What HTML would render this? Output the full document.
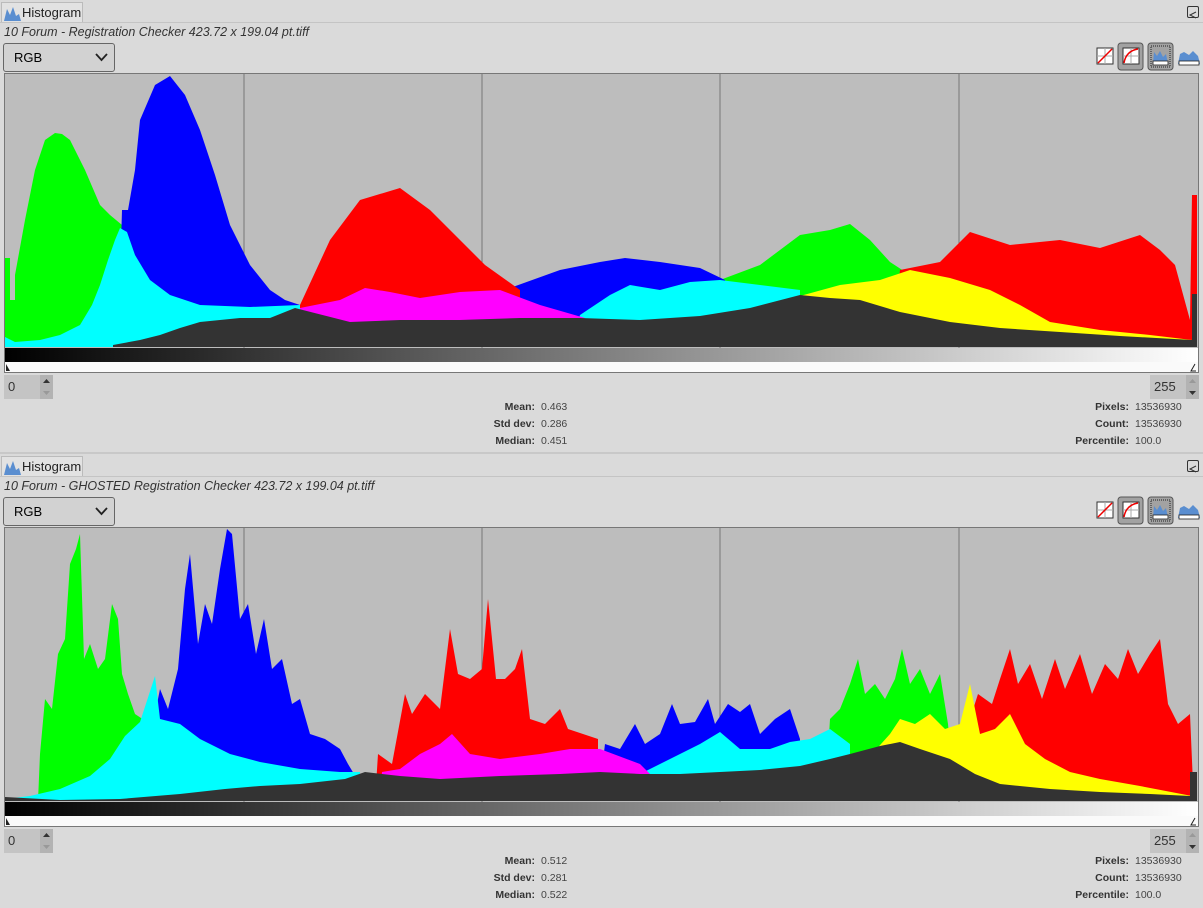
<!DOCTYPE html>
<html><head><meta charset="utf-8"><style>
*{margin:0;padding:0;box-sizing:border-box}
body{width:1203px;height:908px;background:#dadada;font-family:"Liberation Sans",sans-serif;position:relative;overflow:hidden}
.p{position:absolute;left:0;width:1203px;height:454px}
.tab{position:absolute;left:1px;top:2px;width:82px;height:21px;border:1px solid #bbb;border-bottom:none;background:#e2e2e2;font-size:13px;color:#222}
.tab span{position:absolute;left:20px;top:2px}
.sep{position:absolute;left:0;top:22px;width:1203px;height:1px;background:#c4c4c4}
.title{position:absolute;left:4px;top:25px;font-size:12.5px;font-style:italic;color:#333}
.dd{position:absolute;left:3px;top:43px;width:112px;height:29px;border:1px solid #666;border-radius:3px;background:#d2d2d2;font-size:13px}
.dd span{position:absolute;left:10px;top:6px}
.frame{position:absolute;left:4px;top:73px;width:1195px;height:300px;border:1px solid #777;background:#fafafa}
.spin{position:absolute;top:375px;width:49px;height:24px;background:#c4c4c4;font-size:13px;color:#333}
.st{position:absolute;font-size:10.5px;color:#444;line-height:17px}
.st b{color:#333}
.l{text-align:right}
.close{position:absolute;left:1187px;top:6px;width:12px;height:12px;border:1px solid #333;border-radius:2px}
</style></head><body>

<!-- PANEL 1 -->
<div class="p" style="top:0">
<div class="tab"><svg style="position:absolute;left:2px;top:3px" width="17" height="15"><path d="M0 15 L3 3 L6 9 L9 1 L12 10 L15 8 L17 15Z" fill="#5a8ed0"/></svg><span>Histogram</span></div>
<div class="sep"></div>
<div class="close"><svg width="10" height="10"><path d="M8 2 L2 5 L8 8" fill="none" stroke="#333"/></svg></div>
<div class="title">10 Forum - Registration Checker 423.72 x 199.04 pt.tiff</div>
<div class="dd"><span>RGB</span><svg style="position:absolute;left:91px;top:9px" width="13" height="9"><path d="M1 1 L6.5 7 L12 1" fill="none" stroke="#222" stroke-width="1.8"/></svg></div>
<svg style="position:absolute;left:1094px;top:42px" width="109" height="30">
<rect x="3" y="6" width="16" height="16" fill="#fff" stroke="#333"/><path d="M11 6V22M3 14H19" stroke="#aaa"/><path d="M4 21L18 7" stroke="#e00" stroke-width="1.5"/>
<rect x="24" y="1" width="25" height="27" rx="3" fill="#a2a2a2" stroke="#555"/><rect x="29" y="6" width="16" height="16" fill="#fff" stroke="#333"/><path d="M37 6V22M29 14H45" stroke="#aaa"/><path d="M30 21Q32 9 44 7" fill="none" stroke="#e00" stroke-width="1.5"/>
<rect x="54" y="1" width="25" height="27" rx="3" fill="#a2a2a2" stroke="#555"/><rect x="57" y="4" width="19" height="21" fill="none" stroke="#222" stroke-dasharray="1 1"/><path d="M59 22L60 10L63 14L66 9L69 15L72 12L74 22Z" fill="#5a8ed0"/><rect x="59" y="19" width="15" height="4" fill="#fff" stroke="#222" stroke-width=".8"/>
<path d="M84 22L86 12L90 10L95 13L99 9L104 14L106 22Z" fill="#5a8ed0"/><rect x="85" y="19" width="20" height="4" fill="#fff" stroke="#222" stroke-width=".8"/>
</svg>
<div class="frame">
<svg width="1193" height="298" style="position:absolute;left:0;top:0">
<defs><linearGradient id="g" x1="0" x2="1"><stop offset="0" stop-color="#000"/><stop offset="1" stop-color="#fff"/></linearGradient></defs>
<g transform="translate(-5,-74)">
<rect x="5" y="74" width="1193" height="274" fill="#bdbdbd"/>
<path d="M244 74V348M482 74V348M720 74V348M959 74V348" stroke="#777"/>
<polygon fill="#00ff00" points="5,347 5,258 10,258 10,300 15,300 15,275 25,220 35,170 45,140 55,133 62,134 70,140 85,170 100,205 110,215 122,225 130,347"/>
<polygon fill="#00ff00" points="720,347 720,280 760,265 800,235 830,230 850,224 870,240 890,262 910,275 910,347"/>
<polygon fill="#0000ff" points="118,347 122,210 128,210 135,170 140,120 155,85 170,76 185,95 200,130 215,175 230,225 250,265 270,290 285,300 300,305 310,308 310,347"/>
<polygon fill="#0000ff" points="505,347 510,288 560,270 600,262 625,258 660,262 700,268 725,280 725,347"/>
<polygon fill="#ff0000" points="298,347 300,305 330,240 360,200 400,188 430,210 460,240 485,265 520,290 520,347"/>
<polygon fill="#ff0000" points="890,347 900,270 940,262 970,232 1010,245 1060,240 1100,248 1140,235 1160,250 1175,265 1190,320 1192,195 1197,195 1197,347"/>
<polygon fill="#00ffff" points="5,347 5,337 15,342 40,340 60,335 80,325 92,305 100,285 108,260 115,240 120,228 127,232 135,255 150,280 170,295 200,305 250,307 300,305 300,347"/>
<polygon fill="#00ffff" points="570,347 580,315 610,295 630,285 660,290 690,282 720,280 760,285 800,290 800,347"/>
<polygon fill="#ff00ff" points="295,347 300,308 340,300 365,288 390,292 420,298 460,292 500,290 540,305 585,318 585,347"/>
<polygon fill="#ffff00" points="795,347 800,296 840,285 880,280 910,270 950,278 990,290 1020,305 1050,322 1100,330 1150,335 1192,340 1192,347"/>
<polygon fill="#333" points="5,347 113,347 113,345 140,340 160,335 180,328 200,322 240,318 270,318 295,308 350,322 400,320 460,320 520,318 580,318 640,320 700,316 750,308 800,295 830,298 860,300 900,312 950,322 1000,328 1060,332 1120,336 1192,340 1192,294 1197,294 1197,347"/>
<rect x="5" y="348" width="1193" height="14" fill="url(#g)"/>
<rect x="5" y="362" width="1193" height="10" fill="#fafafa"/>
<path d="M6 371V364L10 371Z" fill="#222"/><path d="M1195 364L1191 371H1196" fill="none" stroke="#222"/>
</g></svg></div>
<div class="spin" style="left:4px"><span style="position:absolute;left:4px;top:4px">0</span><div style="position:absolute;left:36px;top:0;width:13px;height:24px;background:#b3b3b3"></div><svg style="position:absolute;left:38px;top:2px" width="9" height="20"><path d="M1 6L4.5 2L8 6Z" fill="#333"/><path d="M1 14L4.5 18L8 14Z" fill="#999"/></svg></div>
<div class="spin" style="left:1150px"><span style="position:absolute;left:4px;top:4px">255</span><div style="position:absolute;left:36px;top:0;width:13px;height:24px;background:#b3b3b3"></div><svg style="position:absolute;left:38px;top:2px" width="9" height="20"><path d="M1 6L4.5 2L8 6Z" fill="#999"/><path d="M1 14L4.5 18L8 14Z" fill="#333"/></svg></div>
<div class="st l" style="left:440px;top:399px;width:95px"><b>Mean:</b><br><b>Std dev:</b><br><b>Median:</b></div>
<div class="st" style="left:541px;top:399px">0.463<br>0.286<br>0.451</div>
<div class="st l" style="left:1030px;top:399px;width:99px"><b>Pixels:</b><br><b>Count:</b><br><b>Percentile:</b></div>
<div class="st" style="left:1135px;top:399px">13536930<br>13536930<br>100.0</div>
<div style="position:absolute;left:0;top:452px;width:1203px;height:2px;background:#c8c8c8"></div>
</div>

<!-- PANEL 2 -->
<div class="p" style="top:454px">
<div class="tab"><svg style="position:absolute;left:2px;top:3px" width="17" height="15"><path d="M0 15 L3 3 L6 9 L9 1 L12 10 L15 8 L17 15Z" fill="#5a8ed0"/></svg><span>Histogram</span></div>
<div class="sep"></div>
<div class="close"><svg width="10" height="10"><path d="M8 2 L2 5 L8 8" fill="none" stroke="#333"/></svg></div>
<div class="title">10 Forum - GHOSTED Registration Checker 423.72 x 199.04 pt.tiff</div>
<div class="dd"><span>RGB</span><svg style="position:absolute;left:91px;top:9px" width="13" height="9"><path d="M1 1 L6.5 7 L12 1" fill="none" stroke="#222" stroke-width="1.8"/></svg></div>
<svg style="position:absolute;left:1094px;top:42px" width="109" height="30">
<rect x="3" y="6" width="16" height="16" fill="#fff" stroke="#333"/><path d="M11 6V22M3 14H19" stroke="#aaa"/><path d="M4 21L18 7" stroke="#e00" stroke-width="1.5"/>
<rect x="24" y="1" width="25" height="27" rx="3" fill="#a2a2a2" stroke="#555"/><rect x="29" y="6" width="16" height="16" fill="#fff" stroke="#333"/><path d="M37 6V22M29 14H45" stroke="#aaa"/><path d="M30 21Q32 9 44 7" fill="none" stroke="#e00" stroke-width="1.5"/>
<rect x="54" y="1" width="25" height="27" rx="3" fill="#a2a2a2" stroke="#555"/><rect x="57" y="4" width="19" height="21" fill="none" stroke="#222" stroke-dasharray="1 1"/><path d="M59 22L60 10L63 14L66 9L69 15L72 12L74 22Z" fill="#5a8ed0"/><rect x="59" y="19" width="15" height="4" fill="#fff" stroke="#222" stroke-width=".8"/>
<path d="M84 22L86 12L90 10L95 13L99 9L104 14L106 22Z" fill="#5a8ed0"/><rect x="85" y="19" width="20" height="4" fill="#fff" stroke="#222" stroke-width=".8"/>
</svg>
<div class="frame">
<svg width="1193" height="298" style="position:absolute;left:0;top:0">
<defs><linearGradient id="g2" x1="0" x2="1"><stop offset="0" stop-color="#000"/><stop offset="1" stop-color="#fff"/></linearGradient></defs>
<g transform="translate(-5,-74)">
<rect x="5" y="74" width="1193" height="274" fill="#bdbdbd"/>
<path d="M244 74V348M482 74V348M720 74V348M959 74V348" stroke="#777"/>
<polygon fill="#00ff00" points="38,347 40,300 45,245 52,255 58,200 65,185 70,110 76,95 80,80 84,205 90,190 98,215 105,205 112,150 118,165 122,220 128,240 135,260 150,270 150,347"/>
<polygon fill="#00ff00" points="825,347 830,265 840,255 850,230 858,205 865,240 875,230 885,245 895,225 902,195 910,230 920,215 930,240 940,220 948,270 955,347"/>
<polygon fill="#0000ff" points="150,347 155,260 160,235 168,255 178,215 185,135 190,100 198,190 205,150 212,170 220,115 227,75 232,80 240,165 248,150 256,200 264,165 272,215 282,205 292,250 300,245 310,280 325,285 340,295 348,310 360,330 360,347"/>
<polygon fill="#0000ff" points="598,347 605,290 620,295 635,270 645,290 660,280 672,250 680,270 695,268 708,245 715,270 728,250 740,258 750,250 760,280 775,265 790,255 800,285 800,347"/>
<polygon fill="#ff0000" points="375,347 378,300 392,310 405,240 412,260 425,240 440,255 450,175 458,220 470,225 482,215 488,145 496,225 505,225 515,215 522,195 530,265 545,270 560,255 568,275 598,285 598,347"/>
<polygon fill="#ff0000" points="965,347 970,265 978,240 992,250 1000,225 1010,195 1018,230 1030,210 1042,245 1055,205 1065,235 1080,200 1092,240 1105,210 1118,225 1128,195 1138,220 1150,200 1160,185 1168,250 1178,270 1190,260 1193,330 1197,330 1197,347"/>
<polygon fill="#00ffff" points="5,347 5,345 30,342 60,335 90,322 110,305 125,282 140,268 155,222 160,265 180,270 200,285 230,300 260,308 300,315 340,318 360,318 360,347"/>
<polygon fill="#00ffff" points="600,347 605,310 640,320 670,305 700,290 720,278 740,295 770,295 790,288 810,285 830,275 850,290 850,347"/>
<polygon fill="#ff00ff" points="380,347 382,318 400,315 420,300 440,290 452,280 470,300 500,305 540,300 570,295 600,295 640,310 650,320 650,347"/>
<polygon fill="#ffff00" points="870,347 872,300 890,280 900,265 915,270 930,260 945,275 960,270 970,230 980,280 995,275 1010,260 1025,290 1045,305 1070,318 1100,325 1140,332 1192,342 1192,347"/>
<polygon fill="#333" points="5,347 5,343 60,346 120,345 180,340 225,335 260,332 300,330 345,325 365,318 400,322 440,325 500,322 560,320 600,318 640,320 680,320 720,318 760,316 800,312 830,305 850,300 880,292 900,288 920,295 950,305 975,320 1000,330 1050,335 1100,338 1150,340 1190,342 1190,318 1197,318 1197,347"/>
<rect x="5" y="348" width="1193" height="14" fill="url(#g2)"/>
<rect x="5" y="362" width="1193" height="10" fill="#fafafa"/>
<path d="M6 371V364L10 371Z" fill="#222"/><path d="M1195 364L1191 371H1196" fill="none" stroke="#222"/>
</g></svg></div>
<div class="spin" style="left:4px"><span style="position:absolute;left:4px;top:4px">0</span><div style="position:absolute;left:36px;top:0;width:13px;height:24px;background:#b3b3b3"></div><svg style="position:absolute;left:38px;top:2px" width="9" height="20"><path d="M1 6L4.5 2L8 6Z" fill="#333"/><path d="M1 14L4.5 18L8 14Z" fill="#999"/></svg></div>
<div class="spin" style="left:1150px"><span style="position:absolute;left:4px;top:4px">255</span><div style="position:absolute;left:36px;top:0;width:13px;height:24px;background:#b3b3b3"></div><svg style="position:absolute;left:38px;top:2px" width="9" height="20"><path d="M1 6L4.5 2L8 6Z" fill="#999"/><path d="M1 14L4.5 18L8 14Z" fill="#333"/></svg></div>
<div class="st l" style="left:440px;top:399px;width:95px"><b>Mean:</b><br><b>Std dev:</b><br><b>Median:</b></div>
<div class="st" style="left:541px;top:399px">0.512<br>0.281<br>0.522</div>
<div class="st l" style="left:1030px;top:399px;width:99px"><b>Pixels:</b><br><b>Count:</b><br><b>Percentile:</b></div>
<div class="st" style="left:1135px;top:399px">13536930<br>13536930<br>100.0</div>
</div>
</body></html>
